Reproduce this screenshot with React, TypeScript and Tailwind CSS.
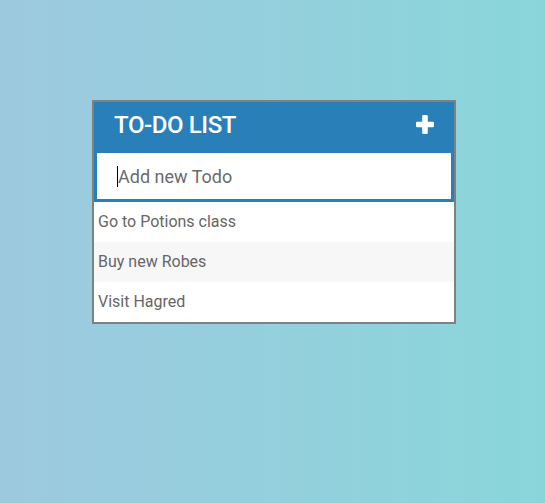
const todos = ["Go to Potions class", "Buy new Robes", "Visit Hagred"];

function Plus() {
  return (
    <svg width="18" height="19" viewBox="0 0 18 19" className="-mt-[6px]">
      <rect x="6.2" y="0" width="5.6" height="19" rx="1.2" fill="white" />
      <rect x="0" y="6.7" width="18" height="5.6" rx="1.2" fill="white" />
    </svg>
  );
}

export default function App() {
  return (
    <div
      className="w-[545px] h-[503px] bg-gradient-to-r from-[#9dc9df] to-[#89d6da] pt-[100px] pl-[92px]"
      style={{ fontFamily: "Roboto, 'Open Sans', sans-serif" }}
    >
      <div className="w-[364px] border-2 border-[#808080] bg-white">
        <div className="h-[50px] bg-[#2980b9] flex items-center justify-between pl-5 pr-5">
          <h1 className="text-white text-[24px] font-medium tracking-[-0.4px] -mt-[4px]">TO-DO LIST</h1>
          <Plus />
        </div>
        <div className="h-[50px] border-[3px] border-t-[1px] border-[#2980b9] bg-white flex items-center pl-[20px]">
          <span className="w-px h-[21px] bg-black" />
          <span className="text-[18px] text-[#6b6b6b]">Add new Todo</span>
        </div>
        <ul>
          {todos.map((t, i) => (
            <li
              key={t}
              className={`h-10 flex items-center pl-1 text-[16px] text-[#666] ${i % 2 === 1 ? "bg-[#f7f7f7]" : "bg-white"}`}
            >
              {t}
            </li>
          ))}
        </ul>
      </div>
    </div>
  );
}
